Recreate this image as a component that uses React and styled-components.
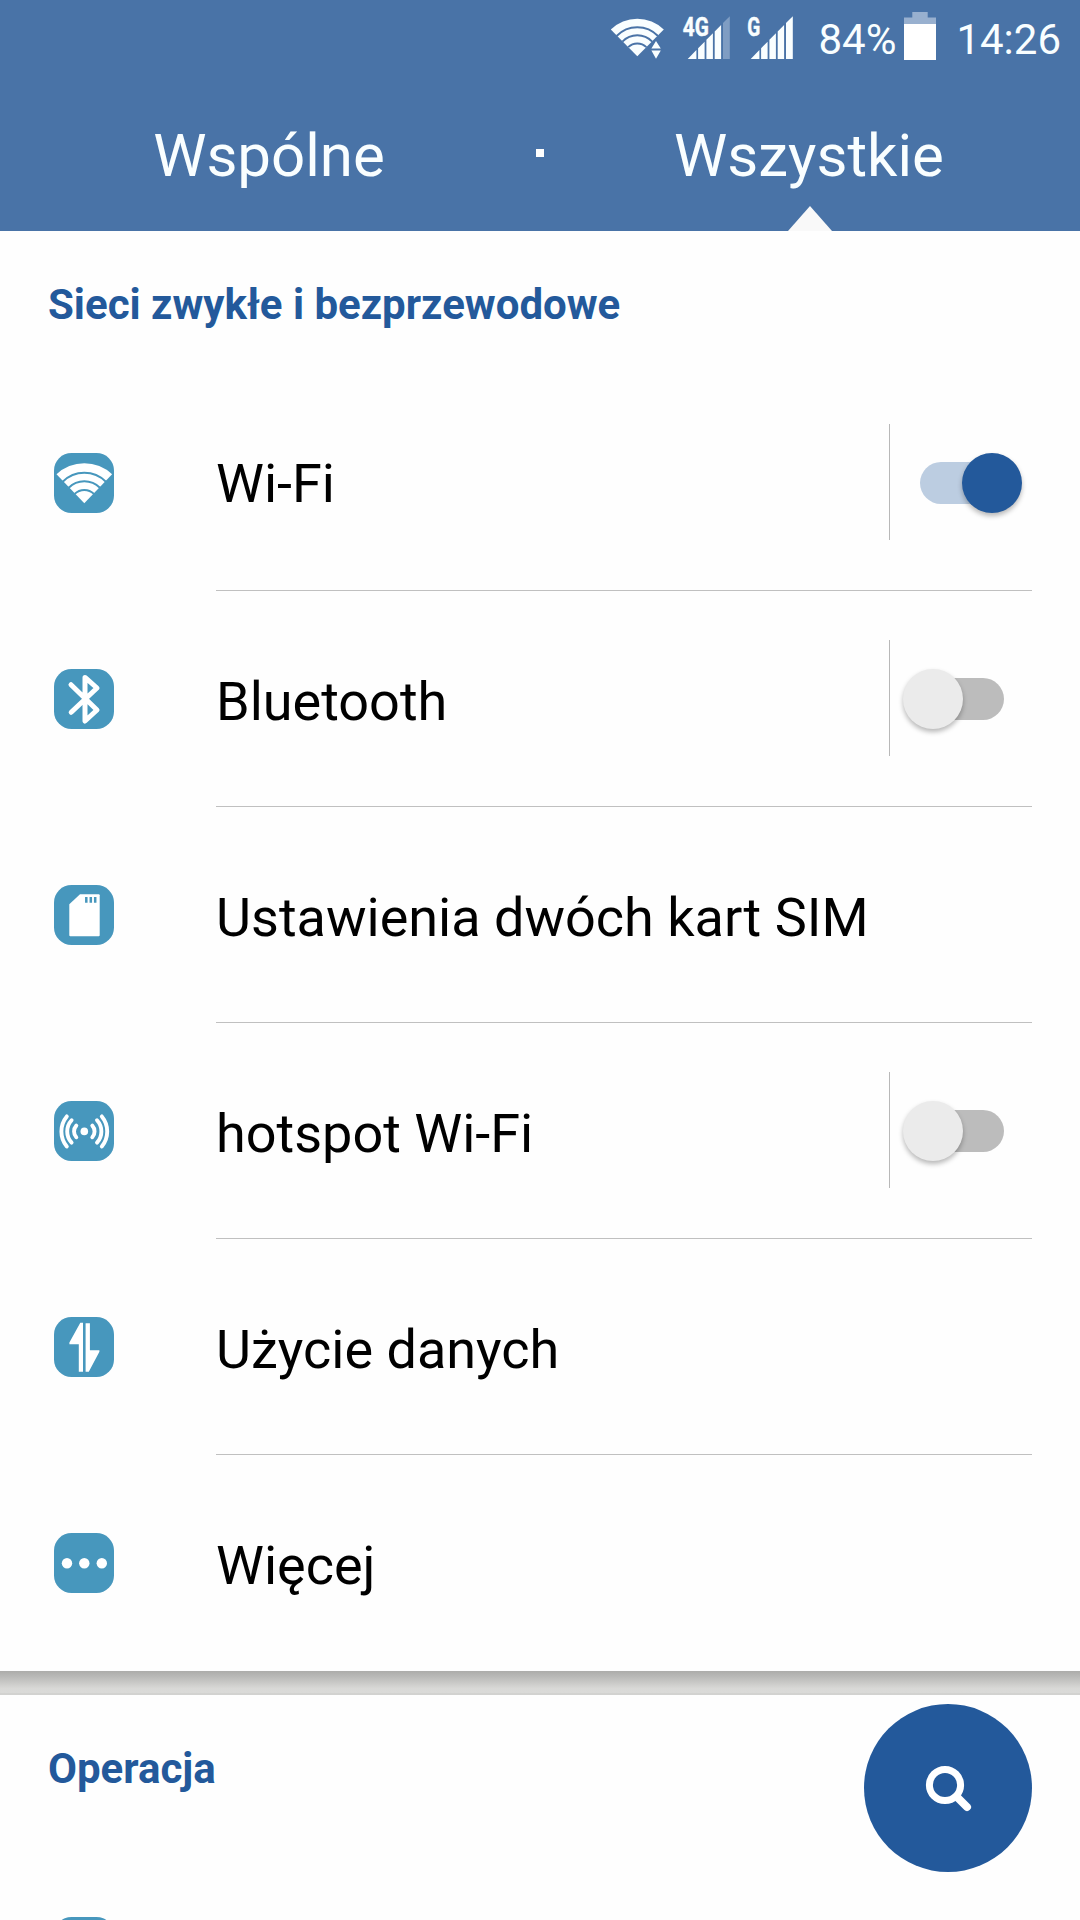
import React, { useState } from "react";
import styled, { createGlobalStyle } from "styled-components";

const GlobalStyle = createGlobalStyle`
  * {
    box-sizing: border-box;
  }

  body {
    margin: 0;
    background-color: #fefefe;
    font-family: Roboto, "Noto Sans", sans-serif;
  }
`;

const Container = styled.div`
  position: relative;
  width: 1080px;
  height: 1920px;
  overflow: hidden;
  background-color: #fefefe;
`;

const Header = styled.header`
  height: 231px;
  background-color: #4973a7;
  color: #f9feff;
`;

const StatusBar = styled.div`
  height: 75px;
  padding-right: 19px;
  display: flex;
  justify-content: flex-end;
`;

const StatusIcon = styled.svg`
  width: ${(props) => props.$width}px;
  height: 75px;
  margin-right: ${(props) => props.$gap}px;
  flex-shrink: 0;
`;

const StatusText = styled.span`
  font-size: 42px;
  line-height: 50px;
  padding-top: 15px;
  margin-right: ${(props) => props.$gap || 0}px;
`;

const Tabs = styled.nav`
  height: 156px;
  display: flex;
`;

const Tab = styled.button`
  position: relative;
  flex: 1;
  border: none;
  padding: 46px 2px 0 0;
  background: none;
  color: inherit;
  font-family: inherit;
  font-size: 60px;
  line-height: 70px;
  display: flex;
  justify-content: center;
`;

const Dot = styled.span`
  width: 8px;
  height: 8px;
  margin: 74px -4px 0;
  background-color: #ffffff;
`;

const Pointer = styled.span`
  position: absolute;
  left: 248px;
  bottom: 0;
  border-left: 22px solid transparent;
  border-right: 22px solid transparent;
  border-bottom: 25px solid #f9f9f9;
`;

const SectionTitle = styled.h2`
  height: 144px;
  margin: 0;
  padding: 49px 48px 0;
  color: #23599b;
  font-size: 42px;
  line-height: 50px;
  font-weight: 700;
`;

const Row = styled.div`
  height: 216px;
  padding: 0 48px 0 54px;
  display: flex;
`;

const RowIcon = styled.svg`
  width: 60px;
  height: 60px;
  margin: 78px 102px 0 0;
  flex-shrink: 0;
`;

const RowBody = styled.div`
  flex: 1;
  display: flex;
  justify-content: space-between;
  border-bottom: ${(props) => (props.$last ? "none" : "1px solid #c0c0c0")};
`;

const Label = styled.span`
  padding-top: ${(props) => (props.$first ? 77 : 79)}px;
  color: #000000;
  font-size: 54px;
  line-height: 63px;
  white-space: nowrap;
`;

const SwitchArea = styled.div`
  width: 143px;
  height: 116px;
  margin-top: 49px;
  padding: 38px 0 0 30px;
  border-left: 1px solid #b8b8b8;
`;

const Track = styled.button`
  display: flex;
  justify-content: ${(props) => (props.$on ? "flex-end" : "flex-start")};
  align-items: center;
  width: 84px;
  height: 42px;
  padding: 0;
  border: none;
  border-radius: 21px;
  background-color: ${(props) => (props.$on ? "#bccde1" : "#bcbcbc")};
`;

const Thumb = styled.span`
  flex-shrink: 0;
  width: 60px;
  height: 60px;
  margin: 0 -17.5px 0.6px;
  border-radius: 50%;
  background-color: ${(props) => (props.$on ? "#23599b" : "#ebebeb")};
  box-shadow: 0 3px 5px rgba(0, 0, 0, 0.28);
`;

const Separator = styled.div`
  height: 24px;
  border-bottom: 2px solid #d2d2d0;
  background: linear-gradient(#acacaa, #b9b9b7 25%, #d9d9d7 80%, #dadad8);
`;

const SearchButton = styled.button`
  position: absolute;
  right: 48px;
  bottom: 48px;
  width: 168px;
  height: 168px;
  padding: 0;
  border: none;
  border-radius: 50%;
  background-color: #23599b;

  svg {
    display: block;
  }
`;

const icons = {
  wifi: (
    <>
      <path d="M30.3 50.3 L2.5 21.3 A40.2 40.2 0 0 1 58.1 21.3 Z" fill="#fff" />
      <g fill="none" stroke="#4797bd" strokeWidth="2">
        <path d="M8.7 28.8 A30.5 30.5 0 0 1 51.9 28.8" />
        <path d="M14.7 34.8 A22 22 0 0 1 45.9 34.8" />
        <path d="M20.7 40.9 A13.5 13.5 0 0 1 39.9 40.9" />
      </g>
    </>
  ),
  bluetooth: (
    <path
      d="M17 15.7 L43 41 L31 52 V8.4 L43 19 L17.2 43.3"
      fill="none"
      stroke="#fff"
      strokeWidth="5"
      strokeLinecap="round"
      strokeLinejoin="round"
    />
  ),
  sim: (
    <>
      <path
        d="M26 9.2 H44.7 Q45.7 9.2 45.7 10.2 V50.3 Q45.7 51.3 44.7 51.3 H16.3 Q15.3 51.3 15.3 50.3 V19.3 Z"
        fill="#fff"
      />
      <path
        d="M32.3 12 V17.8 M36.8 12 V17.8 M41.2 12 V17.8"
        stroke="#4797bd"
        strokeWidth="2.5"
      />
    </>
  ),
  hotspot: (
    <>
      <circle cx="30.3" cy="30.4" r="3.8" fill="#fff" />
      <g fill="none" stroke="#fff" strokeWidth="3.9" strokeLinecap="round">
        <path d="M22.3 24.6 A8.6 8.6 0 0 0 22.3 36.2" />
        <path d="M17.6 19.2 A16.5 16.5 0 0 0 17.6 41.6" />
        <path d="M12.8 15.4 A23.5 23.5 0 0 0 12.8 45.4" />
        <path d="M38.3 24.6 A8.6 8.6 0 0 1 38.3 36.2" />
        <path d="M43 19.2 A16.5 16.5 0 0 1 43 41.6" />
        <path d="M47.8 15.4 A23.5 23.5 0 0 1 47.8 45.4" />
      </g>
    </>
  ),
  data: (
    <path
      d="M26.3 5.8 H29 V54.8 H24.8 V27.2 H15.4 V25.6 Z M31.6 6.3 H35.9 V33.2 H45.4 V34.8 L34.8 54.8 H31.6 Z"
      fill="#fff"
    />
  ),
  more: (
    <g fill="#fff">
      <circle cx="13" cy="30.2" r="5.2" />
      <circle cx="30.3" cy="30.2" r="5.2" />
      <circle cx="47.8" cy="30.2" r="5.2" />
    </g>
  ),
};

const TileIcon = ({ name }) => (
  <RowIcon viewBox="0 0 60 60">
    <rect width="60" height="60" rx="17.5" fill="#4797bd" />
    {icons[name]}
  </RowIcon>
);

const Wifi = () => (
  <StatusIcon viewBox="610 0 55 75" $width={55} $gap={17}>
    <path d="M637.3 56.3 L610.8 29.5 A38 38 0 0 1 663.8 29.5 Z" fill="#f9feff" />
    <g fill="none" stroke="#4973a7" strokeWidth="1.9">
      <path d="M616.6 36 A28.8 28.8 0 0 1 658 36" />
      <path d="M622.4 41.6 A20.8 20.8 0 0 1 652.2 41.6" />
      <path d="M628.2 47.2 A12.9 12.9 0 0 1 646.4 47.2" />
    </g>
    <path d="M656 37.5 L663.5 49.5 L656 62 L648.5 49.5 Z" fill="#4973a7" />
    <path
      d="M656 41 L660.8 48.4 H651.4 Z M651.4 50.6 H660.8 L656 58.8 Z"
      fill="#f9feff"
    />
  </StatusIcon>
);

const Signal = ({ label, weak, gap }) => (
  <StatusIcon viewBox="0 0 48 75" $width={48} $gap={gap}>
    <path
      d="M5.7 59 L14.4 50 V59 Z M16.1 59 V48.2 L22.6 41.7 V59 Z M24.4 59 V39.8 L30.9 33.3 V59 Z M32.7 59 V31.5 L39.1 25 V59 Z"
      fill="#f9feff"
    />
    <path
      d="M41 59 V23 L47.8 16.2 V59 Z"
      fill={weak ? "#7f9dc3" : "#f9feff"}
    />
    <text
      x={weak ? 0.8 : 2.2}
      y="35.6"
      fill="#f9feff"
      stroke="#f9feff"
      strokeWidth="0.5"
      fontSize="25"
      fontWeight="700"
      textLength={weak ? 26 : 13}
      lengthAdjust="spacingAndGlyphs"
    >
      {label}
    </text>
  </StatusIcon>
);

const Battery = () => (
  <StatusIcon viewBox="0 0 32 75" $width={32} $gap={20}>
    <path d="M8.3 12 H23.7 V17.5 H32 V24 H0 V17.5 H8.3 Z" fill="#98b0cf" />
    <rect y="24" width="32" height="36" fill="#fff" />
  </StatusIcon>
);

const settings = [
  { id: "wifi", label: "Wi-Fi", toggle: true },
  { id: "bluetooth", label: "Bluetooth", toggle: true },
  { id: "sim", label: "Ustawienia dwóch kart SIM" },
  { id: "hotspot", label: "hotspot Wi-Fi", toggle: true },
  { id: "data", label: "Użycie danych" },
  { id: "more", label: "Więcej" },
];

const App = () => {
  const [enabled, setEnabled] = useState({ wifi: true });
  const [tab, setTab] = useState("all");

  const handleToggle = (id) => {
    setEnabled({ ...enabled, [id]: !enabled[id] });
  };

  return (
    <Container>
      <GlobalStyle />
      <Header>
        <StatusBar>
          <Wifi />
          <Signal label="4G" weak gap={15} />
          <Signal label="G" gap={25} />
          <StatusText $gap={8}>84%</StatusText>
          <Battery />
          <StatusText>14:26</StatusText>
        </StatusBar>
        <Tabs>
          <Tab onClick={() => setTab("common")}>
            Wspólne
            {tab === "common" && <Pointer />}
          </Tab>
          <Dot />
          <Tab onClick={() => setTab("all")}>
            Wszystkie
            {tab === "all" && <Pointer />}
          </Tab>
        </Tabs>
      </Header>

      <SectionTitle>Sieci zwykłe i bezprzewodowe</SectionTitle>
      {settings.map((item, index) => (
        <Row key={item.id}>
          <TileIcon name={item.id} />
          <RowBody $last={index === settings.length - 1}>
            <Label $first={index === 0}>{item.label}</Label>
            {item.toggle && (
              <SwitchArea>
                <Track
                  $on={enabled[item.id]}
                  onClick={() => handleToggle(item.id)}
                >
                  <Thumb $on={enabled[item.id]} />
                </Track>
              </SwitchArea>
            )}
          </RowBody>
        </Row>
      ))}

      <Separator />
      <SectionTitle>Operacja</SectionTitle>
      <Row>
        <TileIcon />
      </Row>

      <SearchButton>
        <svg width="168" height="168" viewBox="0 0 168 168">
          <g fill="none" stroke="#fff" strokeLinecap="round">
            <circle cx="81" cy="81" r="15.6" strokeWidth="7" />
            <path d="M93 93 L103 103" strokeWidth="8" />
          </g>
        </svg>
      </SearchButton>
    </Container>
  );
};

export default App;
